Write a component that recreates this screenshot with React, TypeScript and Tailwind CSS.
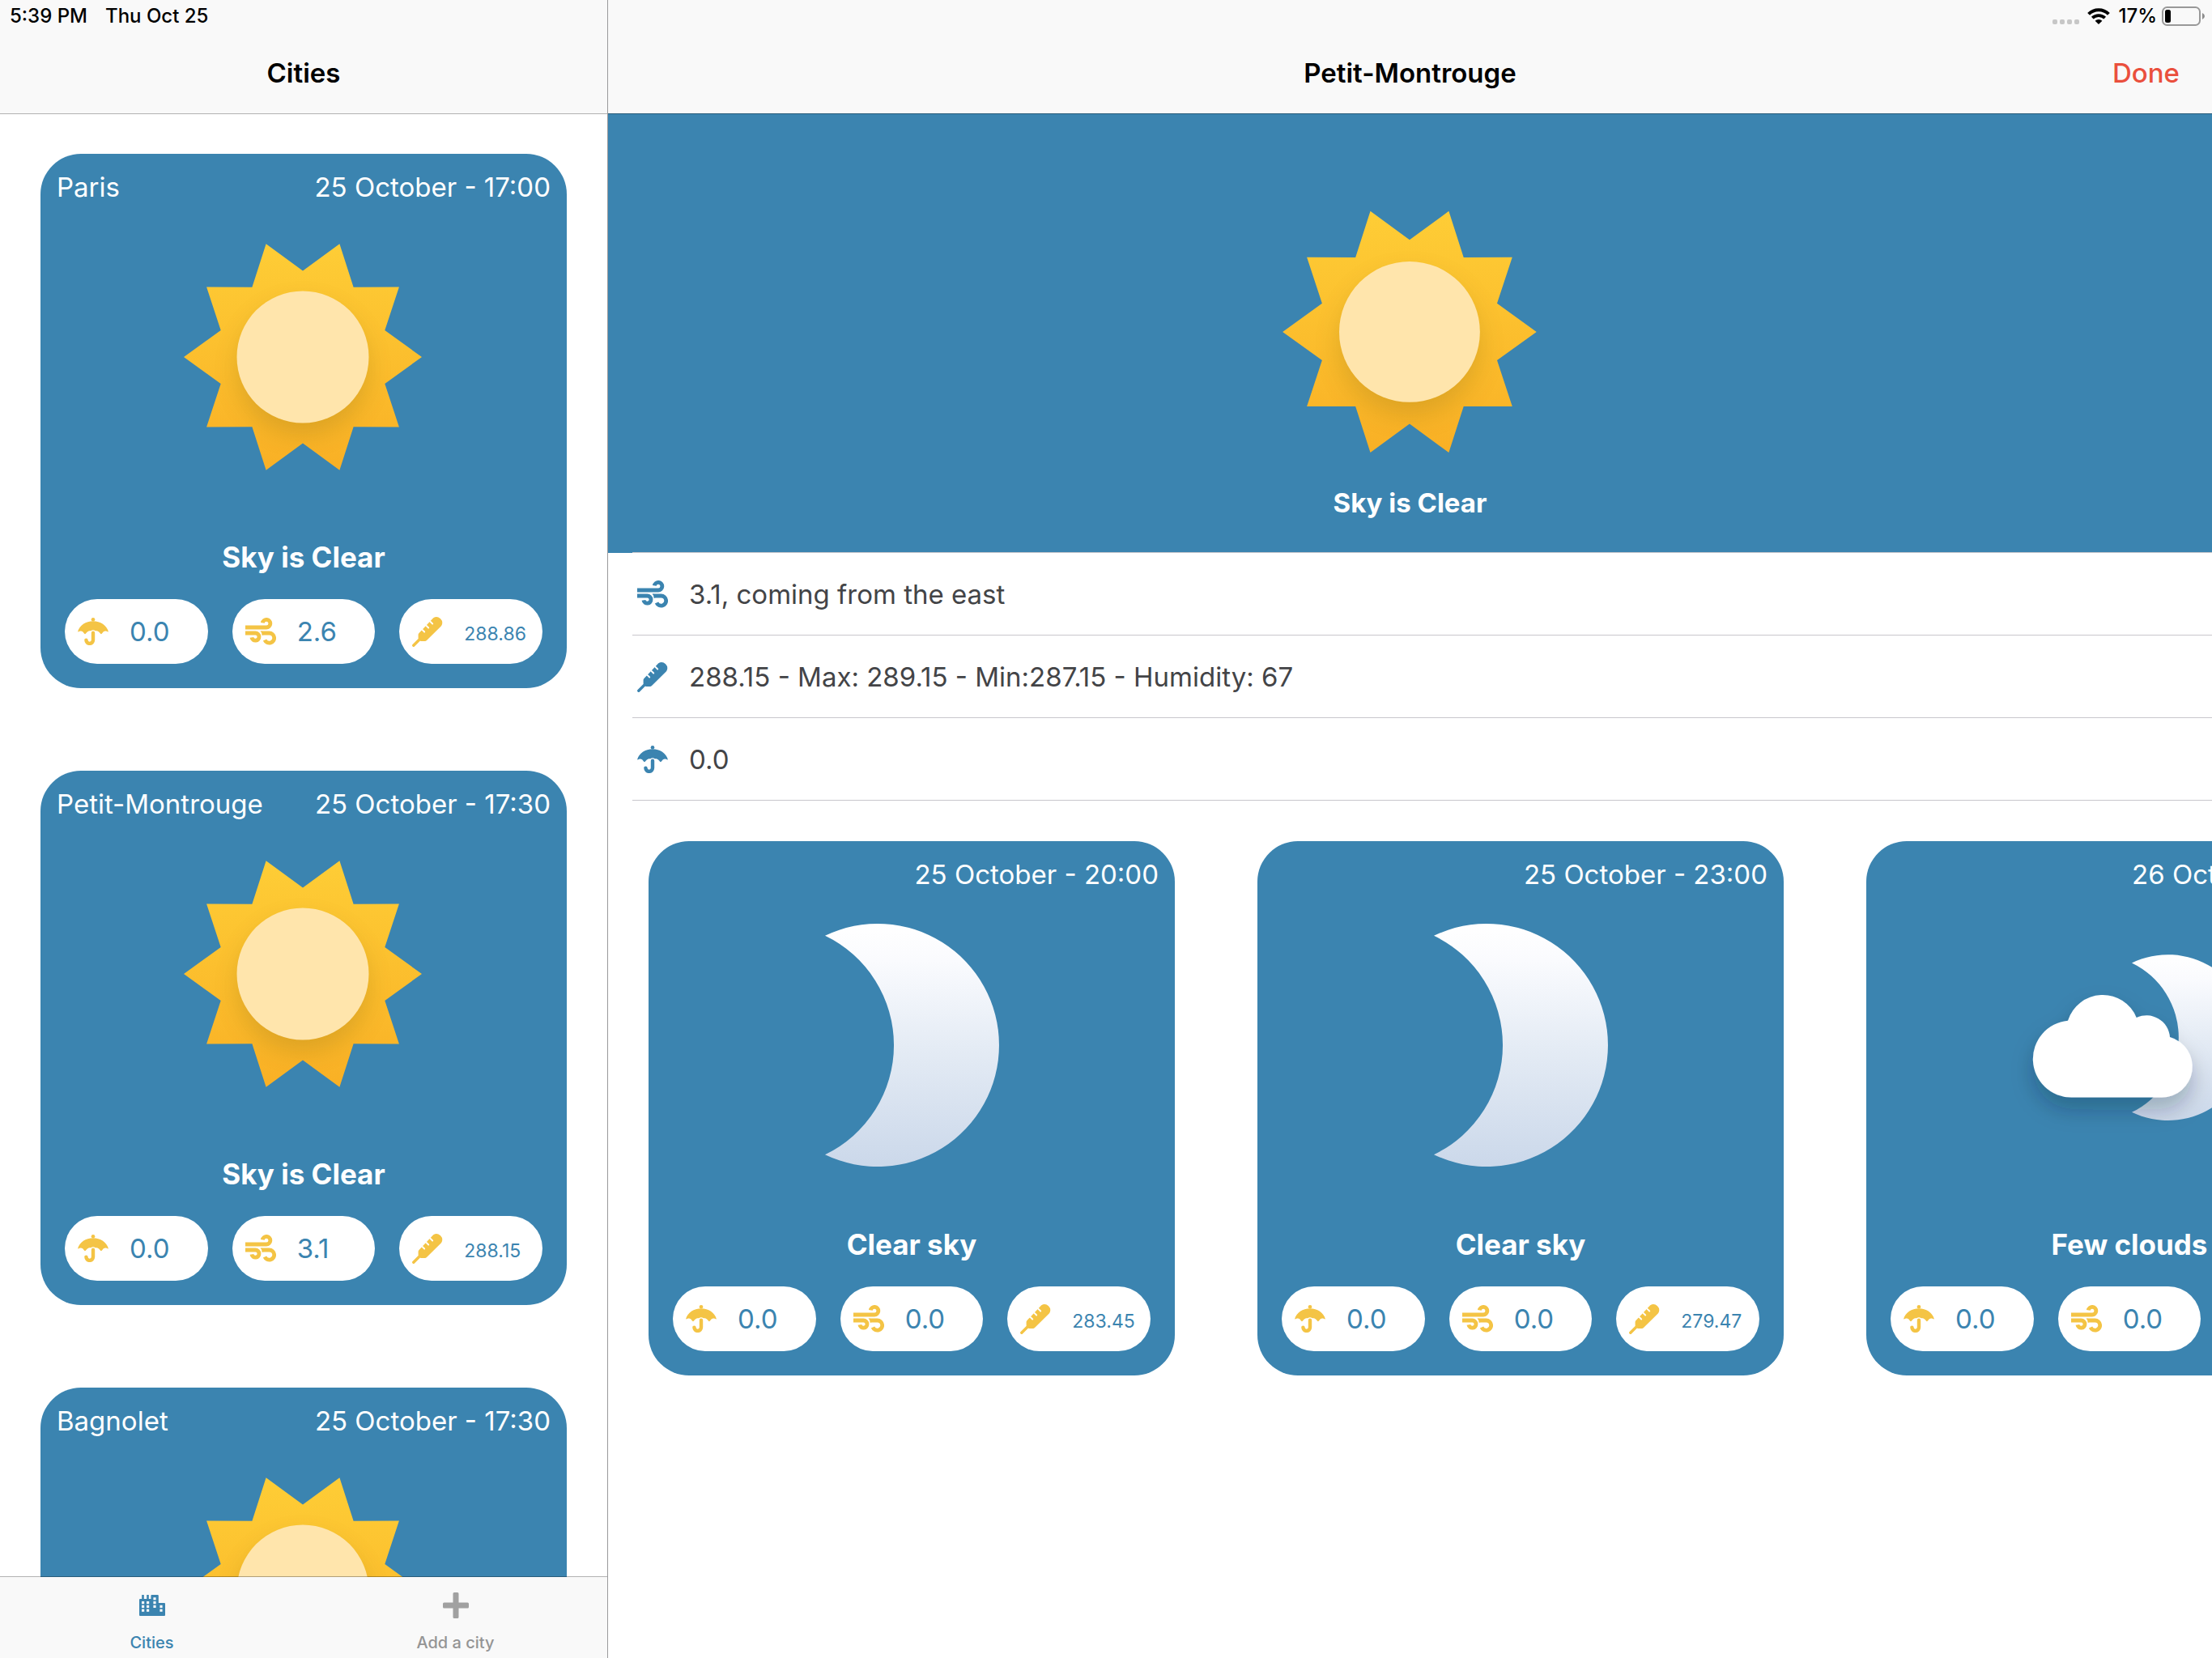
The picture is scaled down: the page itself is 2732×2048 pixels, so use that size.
import React, { useId } from "react";

type IconProps = { className?: string };
type Sky = "sun" | "moon" | "cloudyMoon";

type Forecast = {
  city?: string;
  date: string;
  sky: Sky;
  label: string;
  rain: string;
  wind: string;
  temp: string;
};

const cities: Forecast[] = [
  { city: "Paris", date: "25 October - 17:00", sky: "sun", label: "Sky is Clear", rain: "0.0", wind: "2.6", temp: "288.86" },
  { city: "Petit-Montrouge", date: "25 October - 17:30", sky: "sun", label: "Sky is Clear", rain: "0.0", wind: "3.1", temp: "288.15" },
  { city: "Bagnolet", date: "25 October - 17:30", sky: "sun", label: "Sky is Clear", rain: "0.0", wind: "3.1", temp: "288.15" },
];

const upcoming: Forecast[] = [
  { date: "25 October - 20:00", sky: "moon", label: "Clear sky", rain: "0.0", wind: "0.0", temp: "283.45" },
  { date: "25 October - 23:00", sky: "moon", label: "Clear sky", rain: "0.0", wind: "0.0", temp: "279.47" },
  { date: "26 October - 02:00", sky: "cloudyMoon", label: "Few clouds", rain: "0.0", wind: "0.0", temp: "278.12" },
];

function Umbrella({ className }: IconProps) {
  return (
    <svg viewBox="0 0 38 34" className={className} aria-hidden="true">
      <circle cx="19" cy="2.3" r="2.3" fill="currentColor" />
      <path
        fill="currentColor"
        d="M0 17.6C2.2 9 10 4.2 19 4.2S35.8 9 38 17.6C36.8 17 35.6 16.4 34 16.4C31.4 16.4 30.2 19.8 29 20.2C27.6 19.8 26.4 16.4 23.4 16.2H14.6C11.6 16.4 10.4 19.8 9 20.2C7.8 19.8 6.6 16.4 4 16.4C2.4 16.4 1.2 17 0 17.6Z"
      />
      <path d="M19 18.4V20" fill="none" stroke="white" strokeWidth="6.4" strokeLinecap="round" />
      <path d="M19 18.8V27.6A4.3 4.3 0 0 1 10.4 27.6" fill="none" stroke="currentColor" strokeWidth="4.4" strokeLinecap="round" />
    </svg>
  );
}

function Wind({ className }: IconProps) {
  return (
    <svg viewBox="0 0 38 34" className={className} aria-hidden="true">
      <g fill="none" stroke="currentColor" strokeWidth="4.8">
        <path d="M0 12H26A4.8 4.8 0 1 0 21.3 6.4" />
        <path d="M0 19H12.5A4.6 4.6 0 1 1 7.9 24.4" />
        <path d="M20.4 19H29.6A6.1 6.1 0 1 1 24 27.6" />
      </g>
      <path d="M18.4 16.6H21V21.4H22.4Z" fill="currentColor" />
    </svg>
  );
}

function Thermometer({ className }: IconProps) {
  return (
    <svg viewBox="0 0 38 38" className={className} aria-hidden="true">
      <path d="M1.8 36.2L11 27" stroke="currentColor" strokeWidth="3.4" strokeLinecap="round" />
      <path fill="currentColor" d="M7.6 27.4V23Q7.6 21.8 8.5 21L26.2 2.2A7.2 7.2 0 0 1 36 12.2L18 30Q17 31 16 31H10.6Z" />
      <g stroke="white" strokeWidth="1.9" strokeLinecap="round">
        <path d="M11 15.3L15.2 19.5" />
        <path d="M16 10.3L20.2 14.5" />
        <path d="M21 5.3L25.2 9.5" />
      </g>
    </svg>
  );
}

function CityIcon({ className }: IconProps) {
  const windows = [
    [3, 8], [3, 12.8], [3, 17.6],
    [9, 8], [9, 12.8], [9, 17.6],
    [17.4, 3.2], [17.4, 8], [17.4, 12.8],
    [25.4, 12.8], [25.4, 17.6],
  ];
  return (
    <svg viewBox="0 0 32 26" className={className} aria-hidden="true">
      <path
        fill="currentColor"
        d="M1 5H3.2V0H5.8V5H9.2V0H11.8V5H14.4V1Q14.4 0 15.4 0H22.8Q23.8 0 23.8 1V10H31Q32 10 32 11V25Q32 26 31 26H1Q0 26 0 25V6Q0 5 1 5Z"
      />
      {windows.map(([x, y]) => (
        <rect key={`${x}-${y}`} x={x} y={y} width="3.2" height="3.2" fill="#f9f9f9" />
      ))}
    </svg>
  );
}

function PlusIcon({ className }: IconProps) {
  return (
    <svg viewBox="0 0 32 32" className={className} aria-hidden="true">
      <path
        fill="#a1a1a1"
        d="M14 0H18Q19.5 0 19.5 1.5V12.5H30.5Q32 12.5 32 14V18Q32 19.5 30.5 19.5H19.5V30.5Q19.5 32 18 32H14Q12.5 32 12.5 30.5V19.5H1.5Q0 19.5 0 18V14Q0 12.5 1.5 12.5H12.5V1.5Q12.5 0 14 0Z"
      />
    </svg>
  );
}

const sunPoints = Array.from({ length: 20 }, (_, i) => {
  const radius = i % 2 === 0 ? 147 : 106.5;
  const angle = (i * Math.PI) / 10;
  return `${(149 + radius * Math.cos(angle)).toFixed(1)},${(149 + radius * Math.sin(angle)).toFixed(1)}`;
}).join(" ");

function Sun({ className }: IconProps) {
  const id = useId();
  return (
    <svg viewBox="0 0 300 300" className={className} role="img" aria-label="Sun">
      <defs>
        <linearGradient id={`${id}g`} x1="0" y1="0" x2="0" y2="1">
          <stop offset="0" stopColor="#fecd36" />
          <stop offset="1" stopColor="#f9b025" />
        </linearGradient>
        <clipPath id={`${id}c`}>
          <polygon points={sunPoints} />
        </clipPath>
        <filter id={`${id}b`} x="-50%" y="-50%" width="200%" height="200%">
          <feGaussianBlur stdDeviation="15" />
        </filter>
      </defs>
      <polygon points={sunPoints} fill={`url(#${id}g)`} />
      <g clipPath={`url(#${id}c)`}>
        <circle cx="149" cy="164" r="81" fill="#6b5a10" opacity="0.2" filter={`url(#${id}b)`} />
      </g>
      <circle cx="149" cy="149" r="81.5" fill="#ffe5ac" />
    </svg>
  );
}

function MoonGradient({ id }: { id: string }) {
  return (
    <linearGradient id={id} x1="0" y1="0" x2="0" y2="1">
      <stop offset="0" stopColor="#ffffff" />
      <stop offset="0.15" stopColor="#fafbfe" />
      <stop offset="0.5" stopColor="#e5ecf5" />
      <stop offset="1" stopColor="#cbd8ea" />
    </linearGradient>
  );
}

function Moon({ className }: IconProps) {
  const id = useId();
  return (
    <svg viewBox="0 0 300 300" className={className} role="img" aria-label="Moon">
      <defs>
        <MoonGradient id={`${id}g`} />
      </defs>
      <path d="M43 14.8A150 150 0 1 1 43 285.2A150 150 0 0 0 43 14.8Z" fill={`url(#${id}g)`} />
    </svg>
  );
}

function CloudyMoon({ className }: IconProps) {
  const id = useId();
  return (
    <svg viewBox="0 0 300 300" className={className} role="img" aria-label="Moon behind a cloud">
      <defs>
        <MoonGradient id={`${id}g`} />
        <filter id={`${id}s`} x="-30%" y="-30%" width="160%" height="180%">
          <feDropShadow dx="0" dy="15" stdDeviation="13" floodColor="#10182c" floodOpacity="0.26" />
        </filter>
      </defs>
      <path d="M153 48.4A102.4 102.4 0 1 1 153 232.8A102.4 102.4 0 0 0 153 48.4Z" fill={`url(#${id}g)`} />
      <path
        d="M78.5 214.6A47.5 47.5 0 0 1 74 119.8A45 45 0 0 1 158.7 116A29 29 0 0 1 200 140A38 38 0 0 1 189.5 214.6Z"
        fill="white"
        filter={`url(#${id}s)`}
      />
    </svg>
  );
}

function SkyPicture({ sky, className }: { sky: Sky; className?: string }) {
  if (sky === "sun") return <Sun className={className} />;
  if (sky === "moon") return <Moon className={className} />;
  return <CloudyMoon className={className} />;
}

function Pill({ icon, value, small }: { icon: React.ReactNode; value: string; small?: boolean }) {
  return (
    <div className="flex h-20 min-w-0 flex-1 items-center gap-[26px] rounded-[40px] bg-white pl-4">
      <span className="flex w-[38px] shrink-0 text-[#f4c445]">{icon}</span>
      <span className={small ? "pt-1.5 text-[23px] leading-10 text-[#3b84b0]" : "text-[33px] leading-10 text-[#3b84b0]"}>
        {value}
      </span>
    </div>
  );
}

function ForecastCard({ item }: { item: Forecast }) {
  return (
    <article className="flex h-[660px] shrink-0 flex-col items-center rounded-[50px] bg-[#3b84b0] text-white">
      <div className="flex w-full px-5 pt-5 text-[33px] leading-[42px]">
        {item.city && <span>{item.city}</span>}
        <span className="ml-auto">{item.date}</span>
      </div>
      <SkyPicture sky={item.sky} className="mt-10 size-[300px]" />
      <h2 className="mt-[74px] text-[35px] font-bold leading-[44px]">{item.label}</h2>
      <div className="mt-[30px] flex w-full gap-[30px] px-[30px]">
        <Pill icon={<Umbrella className="w-full" />} value={item.rain} />
        <Pill icon={<Wind className="w-full" />} value={item.wind} />
        <Pill icon={<Thermometer className="w-full" />} value={item.temp} small />
      </div>
    </article>
  );
}

function DetailRow({ icon, text }: { icon: React.ReactNode; text: string }) {
  return (
    <li className="flex h-[102px] items-center gap-[26px] border-b border-[#c8c7cc] pl-1.5">
      <span className="flex w-[38px] shrink-0 text-[#3b84b0]">{icon}</span>
      <span className="text-[33px] leading-10 text-[#434447]">{text}</span>
    </li>
  );
}

function StatusIcons() {
  return (
    <div className="flex items-center text-[24px] font-medium leading-10">
      <span className="mt-3.5 flex gap-[3px]">
        {[0, 1, 2, 3].map((n) => (
          <i key={n} className="size-1.5 rounded-[2px] bg-[#c7c7c7]" />
        ))}
      </span>
      <svg viewBox="0 0 28 20" className="ml-2.5 h-5 w-7" aria-label="Wi-Fi" role="img">
        <path d="M1.6 7.4A17.6 17.6 0 0 1 26.4 7.4" fill="none" stroke="black" strokeWidth="4" />
        <path d="M6.3 12.2A11 11 0 0 1 21.7 12.2" fill="none" stroke="black" strokeWidth="3.8" />
        <path d="M14 20L9.6 15.8A6.2 6.2 0 0 1 18.4 15.8Z" fill="black" />
      </svg>
      <span className="ml-2.5">17%</span>
      <svg viewBox="0 0 54 24" className="ml-1.5 h-6 w-[54px]" aria-label="Battery" role="img">
        <rect x="1" y="1" width="46" height="22" rx="5.5" fill="none" stroke="#999999" strokeWidth="2" />
        <rect x="4" y="4" width="7" height="16" rx="2.5" fill="black" />
        <path d="M50 8Q53 9.5 53 12T50 16Z" fill="#8c8c8c" />
      </svg>
    </div>
  );
}

export default function App() {
  return (
    <div className="flex h-screen overflow-hidden bg-white font-['Inter','Liberation_Sans',sans-serif] text-black">
      <aside className="flex w-[751px] shrink-0 flex-col border-r border-[#9a9a9b]">
        <header className="h-[141px] shrink-0 border-b border-black/30 bg-[#f9f9f9] bg-clip-padding">
          <div className="flex h-10 items-center gap-[22px] pl-3 text-[24px] font-medium">
            <span>5:39 PM</span>
            <span>Thu Oct 25</span>
          </div>
          <h1 className="pt-7 text-center text-[33px] font-semibold leading-[44px]">Cities</h1>
        </header>
        <main className="flex min-h-0 flex-1 flex-col gap-[102px] overflow-hidden px-[50px] pt-[49px]">
          {cities.map((item) => (
            <ForecastCard key={item.city} item={item} />
          ))}
        </main>
        <nav className="relative -mt-px flex h-[101px] shrink-0 border-t border-black/30 bg-[#f9f9f9] bg-clip-padding text-[20px] font-medium leading-6">
          <button type="button" className="flex flex-1 flex-col items-center pt-[19px] text-[#3b84b0]">
            <span className="flex h-8 items-center">
              <CityIcon className="h-[26px] w-8" />
            </span>
            <span className="mt-[18px]">Cities</span>
          </button>
          <button type="button" className="flex flex-1 flex-col items-center pt-[19px] text-[#949494]">
            <span className="flex h-8 items-center">
              <PlusIcon className="size-8" />
            </span>
            <span className="mt-[18px]">Add a city</span>
          </button>
        </nav>
      </aside>

      <section className="flex min-w-0 flex-1 flex-col">
        <header className="relative z-10 h-[141px] shrink-0 border-b border-black/30 bg-[#f9f9f9] bg-clip-padding">
          <div className="flex h-10 items-center justify-end pr-2">
            <StatusIcons />
          </div>
          <div className="grid grid-cols-[1fr_auto_1fr] pt-7 text-[33px] leading-[44px]">
            <h1 className="col-start-2 font-semibold">Petit-Montrouge</h1>
            <button type="button" className="justify-self-end pr-10 font-medium text-[#ea4f3d]">
              Done
            </button>
          </div>
        </header>

        <div className="-mt-px flex h-[543px] shrink-0 flex-col items-center bg-[#3b84b0] pt-[111px] text-white">
          <Sun className="size-80" />
          <h2 className="mt-7 text-[33px] font-bold leading-[44px]">Sky is Clear</h2>
        </div>

        <ul className="-mt-px ml-[30px] border-t border-[#c8c7cc]">
          <DetailRow icon={<Wind className="w-full" />} text="3.1, coming from the east" />
          <DetailRow icon={<Thermometer className="w-full" />} text="288.15 - Max: 289.15 - Min:287.15 - Humidity: 67" />
          <DetailRow icon={<Umbrella className="w-full" />} text="0.0" />
        </ul>

        <div className="flex gap-[102px] overflow-hidden pl-[50px] pt-[50px]">
          {upcoming.map((item) => (
            <div key={item.date} className="w-[650px] shrink-0">
              <ForecastCard item={item} />
            </div>
          ))}
        </div>
      </section>
    </div>
  );
}
